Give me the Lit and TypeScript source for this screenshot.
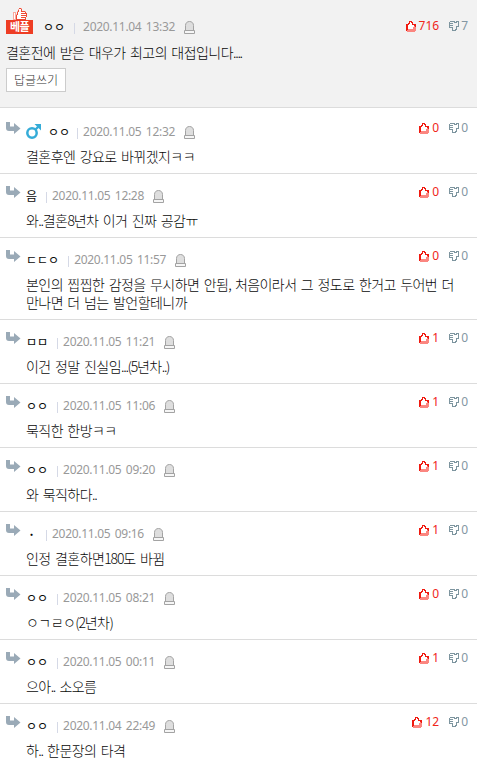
import { LitElement, html, svg, css, nothing } from "lit";
import { customElement, property } from "lit/decorators.js";

type Reply = { nick: string; date: string; text: string[]; up: number; down: number; male?: boolean };

const replies: Reply[] = [
  { nick: "ㅇㅇ", date: "2020.11.05 12:32", text: ["결혼후엔 강요로 바뀌겠지ㅋㅋ"], up: 0, down: 0, male: true },
  { nick: "음", date: "2020.11.05 12:28", text: ["와..결혼8년차 이거 진짜 공감ㅠ"], up: 0, down: 0 },
  { nick: "ㄷㄷㅇ", date: "2020.11.05 11:57", text: ["본인의 찝찝한 감정을 무시하면 안됨, 처음이라서 그 정도로 한거고 두어번 더", "만나면 더 넘는 발언할테니까"], up: 0, down: 0 },
  { nick: "ㅁㅁ", date: "2020.11.05 11:21", text: ["이건 정말 진실임...(5년차..)"], up: 1, down: 0 },
  { nick: "ㅇㅇ", date: "2020.11.05 11:06", text: ["묵직한 한방ㅋㅋ"], up: 1, down: 0 },
  { nick: "ㅇㅇ", date: "2020.11.05 09:20", text: ["와 묵직하다.."], up: 1, down: 0 },
  { nick: "·", date: "2020.11.05 09:16", text: ["인정 결혼하면180도 바뀜"], up: 1, down: 0 },
  { nick: "ㅇㅇ", date: "2020.11.05 08:21", text: ["ㅇㄱㄹㅇ(2년차)"], up: 0, down: 0 },
  { nick: "ㅇㅇ", date: "2020.11.05 00:11", text: ["으아.. 소오름"], up: 1, down: 0 },
  { nick: "ㅇㅇ", date: "2020.11.04 22:49", text: ["하.. 한문장의 타격"], up: 12, down: 0 },
];

/* Latin digits and punctuation are set tighter than Hangul. */
const typeset = (s: string) =>
  s.split(/([0-9]+|[.,()]+)/).map((p) =>
    /^[0-9]/.test(p) ? html`<span class="digits">${p}</span>` : /^[.,()]/.test(p) ? html`<span class="punct">${p}</span>` : p);

/* Pixel icons: one character per pixel. */
const inks: Record<string, string> = { R: "#f01a10", P: "#fb8680", G: "#7d959f", O: "#ee4b35", o: "#f9a99f", W: "#fff" };
const bitmap = (rows: string[]) => html`<svg width=${rows[0].length} height=${rows.length} shape-rendering="crispEdges">
  ${rows.flatMap((row, y) => [...row].map((c, x) => (inks[c] ? svg`<rect x=${x} y=${y} width="1" height="1" fill=${inks[c]} />` : nothing)))}
</svg>`;

const thumbUp = bitmap([
  "...RRR....",
  "...RWRR...",
  "..RRWWR...",
  "RRRWWWRRRR",
  "RRWWWWWWRR",
  "RRWWWWWWPR",
  "RRWWWWWPPP",
  "RRWWWWWPPP",
  "RRPPPPPPPP",
  "RPPPPPPPPP",
  ".PPPPPPPP.",
]);
const thumbDown = bitmap([
  ".GGGGG.GGG",
  "G....GGG.G",
  "GGGG.....G",
  "G........G",
  "GGGG.....G",
  "G......GGG",
  "GGGG...G..",
  "...G...G..",
  "...G..GG..",
  "...GGGG...",
]);
const bestThumb = bitmap([
  "......OOo.....",
  ".....oWWO.....",
  ".....OWWO.....",
  "....oOWWOOOOo.",
  "ooo.OWWWWWWWO.",
  "oWo.OWWWOOOOOO",
  "oWooOWWWWWWWWO",
  "oWoOWWWWOOOOOO",
  "oWoOWWWWWWWWWO",
  "oWoOWWWWOOOOO.",
  "oWoOWWWWWWWWO.",
  "oooOOOOOOOOOO.",
]);

const lock = html`<svg class="lock" width="11" height="13" viewBox="0 0 11 13">
  <path d="M1.500 9V4.500C1.500 2 3.200.5 5.500.5S9.500 2 9.500 4.500V9" fill="#dedede" stroke="#a3a3a3" />
  <path d="M.5 9.500H10.500V12.500H.5Z" fill="#f6f6f6" stroke="#a3a3a3" />
</svg>`;

const arrow = html`<svg class="arrow" width="15" height="12" viewBox="0 0 15 12">
  <path d="M0 0H4V4.500H8V1L14.500 6.500L8 12V9H3Q0 9 0 6Z" fill="#9aaab7" />
</svg>`;

const male = html`<svg class="male" width="15" height="15" viewBox="0 0 15 15">
  <circle cx="6" cy="9" r="4.700" fill="none" stroke="#35acd8" stroke-width="2.500" />
  <path d="M9 6L12.500 2.500" stroke="#35acd8" stroke-width="2.400" />
  <path d="M8.500 0H15V6.500Z" fill="#35acd8" />
</svg>`;

@customElement("vote-counts")
class VoteCounts extends LitElement {
  @property({ type: Number }) up = 0;
  @property({ type: Number }) down = 0;
  static styles = css`
    :host { display: flex; flex: none; font: 12px/16px "Noto Sans", "Open Sans", sans-serif; }
    .vote { display: flex; align-items: flex-start; gap: 3px; color: #f0261a; }
    .down { margin-left: 10px; gap: 2px; color: #8397a3; }
    svg { display: block; margin-top: 3px; }
  `;
  render() {
    return html`<span class="vote">${thumbUp}${this.up}</span>
      <span class="vote down">${thumbDown}${this.down}</span>`;
  }
}

@customElement("app-root")
class AppRoot extends LitElement {
  static styles = css`
    :host { display: block; height: 775px; overflow: hidden; background: #fff; color: #080808;
      font-family: "Noto Sans CJK KR", sans-serif; font-weight: 300; }
    * { box-sizing: border-box; }
    svg { display: block; flex: none; }
    .best { height: 108px; background: #f2f2f2; border-bottom: 1px solid #dcdcdc; padding: 8px 9px 0 6px; }
    .best .meta { height: 26px; padding-top: 12px; }
    .top { display: flex; justify-content: space-between; height: 26px; }
    .top vote-counts { margin-top: 10px; }
    .who { display: flex; }
    .badge { width: 27px; margin-right: 10px; }
    .badge svg { margin-left: 7px; }
    .label { height: 14px; background: #ee3d24; color: #fff; font-size: 11px; font-weight: 700; line-height: 13px;
      text-align: center; letter-spacing: -0.5px; }
    .meta { display: flex; align-items: center; height: 16px; }
    .nick { font-size: 12px; line-height: 16px; font-weight: 400; white-space: nowrap; }
    .nick.dot { width: 11px; text-align: center; font-weight: 700; }
    .bar { width: 1px; height: 11px; margin: 2px 5px 0 9px; background: #d5d9e6; }
    .best .bar { margin: 2px 8px 0 9px; }
    .date { width: 92px; font: 12px/16px "Noto Sans", "Open Sans", sans-serif; letter-spacing: -0.3px; word-spacing: 1.6px;
      color: #999; white-space: nowrap; }
    .lock { margin-left: 9px; }
    .text { font-size: 14px; line-height: 18px; letter-spacing: -0.55px; word-spacing: 1.8px; white-space: nowrap; }
    .digits { letter-spacing: -1.2px; }
    .punct { letter-spacing: -1.3px; }
    .best .text { margin-top: 9px; }
    .write { display: block; width: 60px; height: 24px; margin: 7px 0 0; padding: 0; border: 1px solid #ccc; background: #fff;
      color: #333; font: 300 12px/20px "Noto Sans CJK KR", sans-serif; }
    .reply { display: flex; padding: 10px 9px 8px 6px; border-bottom: 1px solid #dcdcdc; }
    .reply:last-child { border: 0; }
    .reply.first { padding-top: 12px; }
    .arrow { margin: 2px 5px 0 0; }
    .body { flex: 1; min-width: 0; }
    .body .meta { margin-top: 4px; }
    .body .text { margin-top: 7px; }
    .male { margin: 0 7px 2px 0; }
    .male ~ .bar { margin-left: 7px; }
    .body .head { display: flex; justify-content: space-between; height: 20px; }
  `;

  meta(nick: string, date: string, isMale = false) {
    return html`<div class="meta">${isMale ? male : nothing}<span class="nick ${nick === "·" ? "dot" : ""}">${nick}</span
      ><span class="bar"></span><span class="date">${date}</span>${lock}</div>`;
  }

  render() {
    return html`
      <section class="best">
        <div class="top">
          <div class="who">
            <div class="badge">${bestThumb}<div class="label">베플</div></div>
            ${this.meta("ㅇㅇ", "2020.11.04 13:32")}
          </div>
          <vote-counts up="716" down="7"></vote-counts>
        </div>
        <div class="text">${typeset("결혼전에 받은 대우가 최고의 대접입니다....")}</div>
        <button class="write">답글쓰기</button>
      </section>
      ${replies.map((r, i) => html`<article class="reply ${i === 0 ? "first" : ""}">
        ${arrow}
        <div class="body">
          <div class="head">
            ${this.meta(r.nick, r.date, r.male)}
            <vote-counts up=${r.up} down=${r.down}></vote-counts>
          </div>
          <div class="text">${r.text.map((t) => html`<div>${typeset(t)}</div>`)}</div>
        </div>
      </article>`)}
    `;
  }
}
